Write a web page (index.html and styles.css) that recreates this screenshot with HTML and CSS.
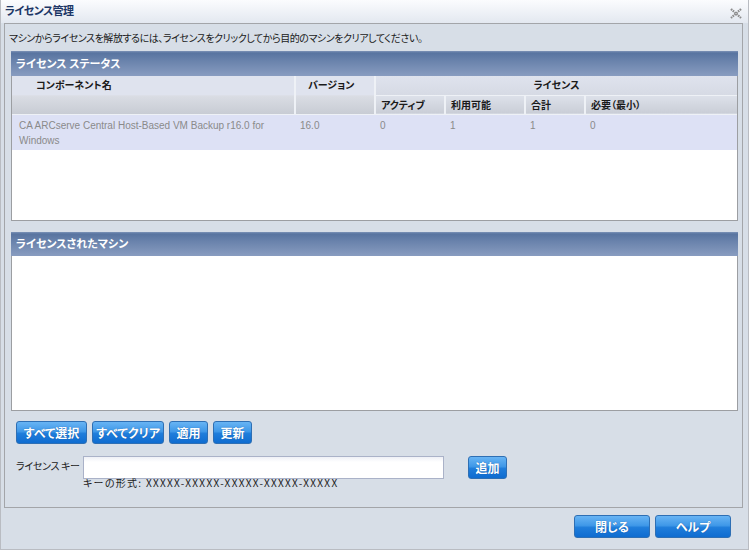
FILE: index.html
```html
<!DOCTYPE html>
<html lang="ja">
<head>
    <meta charset="UTF-8">
    <title>ライセンス管理</title>
    <link rel="stylesheet" href="styles.css">
</head>
<body>
    <div class="window">
        <div class="title-bar">
            <span class="title">ライセンス管理</span>
            <svg class="close-icon" width="12" height="11" viewBox="0 0 12 11">
                <path d="M1 1 L11 10 M11 1 L1 10" stroke="#8c8c8c" stroke-width="2.2" stroke-dasharray="1.6 0.8" fill="none"/>
            </svg>
        </div>

        <div class="frame">
            <p class="hint">マシンからライセンスを解放するには、ライセンスをクリックしてから目的のマシンをクリアしてください。</p>

            <section class="panel status-panel">
                <div class="panel-header">ライセンス ステータス</div>
                <table class="license-table">
                    <colgroup>
                        <col class="col-name">
                        <col class="col-version">
                        <col class="col-active">
                        <col class="col-available">
                        <col class="col-total">
                        <col>
                    </colgroup>
                    <thead>
                        <tr>
                            <th rowspan="2" class="span-head name-head">コンポーネント名</th>
                            <th rowspan="2" class="span-head">バージョン</th>
                            <th colspan="4" class="group-head">ライセンス</th>
                        </tr>
                        <tr class="sub-row">
                            <th>アクティブ</th>
                            <th>利用可能</th>
                            <th>合計</th>
                            <th>必要（最小）</th>
                        </tr>
                    </thead>
                    <tbody>
                        <tr class="data-row">
                            <td class="name-cell">CA ARCserve Central Host-Based VM Backup r16.0 for Windows</td>
                            <td>16.0</td>
                            <td>0</td>
                            <td>1</td>
                            <td>1</td>
                            <td>0</td>
                        </tr>
                    </tbody>
                </table>
            </section>

            <section class="panel machine-panel">
                <div class="panel-header">ライセンスされたマシン</div>
            </section>

            <div class="action-row">
                <button class="blue-btn w-wide">すべて選択</button>
                <button class="blue-btn w-wide2">すべてクリア</button>
                <button class="blue-btn w-small">適用</button>
                <button class="blue-btn w-small">更新</button>
            </div>

            <div class="key-row">
                <label class="key-label">ライセンス キー</label>
                <div class="key-field">
                    <input type="text" class="key-input">
                    <div class="key-format">キーの形式: XXXXX-XXXXX-XXXXX-XXXXX-XXXXX</div>
                </div>
                <button class="blue-btn w-small add-btn">追加</button>
            </div>
        </div>

        <div class="footer">
            <button class="blue-btn w-footer">閉じる</button>
            <button class="blue-btn w-footer">ヘルプ</button>
        </div>
    </div>
</body>
</html>
```

FILE: styles.css
```css
:root {
    --bg-color: #d7dee7;
    --frame-border: #a3a5a9;
    --panel-border: #9c9ea2;
    --head-text: #1d3766;
    --text-color: #1a1a1a;
    --muted-text: #8a8a8a;
}

* {
    margin: 0;
    padding: 0;
    box-sizing: border-box;
}

body {
    font-family: "Noto Sans CJK JP", "Liberation Sans", sans-serif;
    font-size: 10px;
    letter-spacing: -0.3px;
    font-feature-settings: "palt" 1;
    color: var(--text-color);
    background: #ffffff;
}

.window {
    width: 749px;
    height: 550px;
    background: var(--bg-color);
    border: 1px solid #b9bcc2;
    border-top: none;
    display: flex;
    flex-direction: column;
}

/* タイトルバー */
.title-bar {
    height: 23px;
    background: linear-gradient(to bottom, #fbfcfe, #e3e8f0);
    display: flex;
    align-items: center;
    justify-content: space-between;
    padding: 0 6px 0 4px;
}

.title {
    font-size: 11px;
    letter-spacing: -0.6px;
    font-weight: bold;
    color: var(--head-text);
    line-height: 14px;
    margin-top: -4px;
}

.close-icon {
    margin-top: 4px;
}

.frame {
    height: 485px;
    margin-left: 3px;
    width: 739px;
    border: 1px solid var(--frame-border);
    padding: 0 4px 0 6px;
    display: flex;
    flex-direction: column;
}

.hint {
    height: 27px;
    padding-top: 7px;
    line-height: 14px;
    margin-left: -2px;
    letter-spacing: -0.45px;
}

.panel {
    background: #ffffff;
    border: 1px solid var(--panel-border);
    border-top: none;
}

.status-panel {
    height: 170px;
}

.machine-panel {
    height: 179px;
    margin-top: 11px;
}

.panel-header {
    height: 25px;
    background: linear-gradient(to bottom, #7d93b7 0, #5874a0 2px, #6a83ac 40%, #889cc0 100%);
    color: #ffffff;
    font-weight: bold;
    font-size: 11px;
    letter-spacing: 0;
    line-height: 24px;
    padding-left: 5px;
    margin: 0 -1px;
}

.machine-panel .panel-header {
    height: 24px;
    line-height: 23px;
}

/* ライセンス テーブル */
.license-table {
    width: 100%;
    border-collapse: collapse;
    table-layout: fixed;
}

.col-name { width: 283px; }
.col-version { width: 80px; }
.col-active { width: 70px; }
.col-available { width: 80px; }
.col-total { width: 60px; }

.license-table th {
    font-weight: bold;
    text-align: left;
    height: 19px;
    padding: 0 5px;
    letter-spacing: 0;
    border-left: 2px solid #eef1f6;
    border-bottom: 1px solid #eef1f6;
    background: linear-gradient(to bottom, #dde1ea, #c9cdd6);
    line-height: 18px;
}

.license-table th.span-head {
    vertical-align: top;
    background: linear-gradient(to bottom, #dfe3ee 0, #dfe3ee 50%, #dadde4 52%, #c8ccd4 100%);
    padding-left: 12px;
}

.license-table th.name-head {
    border-left: none;
    padding-left: 24px;
}

.license-table th.group-head {
    text-align: center;
    background: linear-gradient(to bottom, #dfe3ee, #d6dae4);
}

.data-row td {
    background: #dde1f5;
    height: 36px;
    vertical-align: top;
    padding: 3px 5px 0 5px;
    font-family: "Liberation Sans", sans-serif;
    font-size: 10px;
    letter-spacing: 0;
    line-height: 15px;
    color: var(--muted-text);
}

.data-row td.name-cell {
    padding-left: 7px;
    padding-right: 14px;
}

/* ボタン */
.blue-btn {
    height: 23px;
    padding: 0;
    white-space: nowrap;
    border: 1px solid #2e6fb4;
    border-radius: 3px;
    background: linear-gradient(to bottom, #68b4f4 0, #3f98e8 45%, #1f7ddb 55%, #0f6cd0 100%);
    color: #ffffff;
    font-family: "Noto Sans CJK JP", sans-serif;
    font-feature-settings: "palt" 1;
    font-weight: bold;
    font-size: 12px;
    line-height: 20px;
    cursor: pointer;
    text-shadow: 0 0 1px rgba(0, 40, 100, 0.5);
}

.w-wide { width: 71px; }
.w-wide2 { width: 72px; }
.w-small { width: 39px; }
.w-footer { width: 76px; }

.action-row {
    display: flex;
    gap: 5px;
    margin-top: 10px;
    padding-left: 5px;
}

.key-row {
    display: flex;
    align-items: flex-start;
    margin-top: 12px;
    padding-left: 5px;
}

.key-label {
    width: 67px;
    white-space: nowrap;
    line-height: 19px;
}

.key-input {
    width: 361px;
    height: 23px;
    border: 1px solid #aab2c8;
    background: linear-gradient(to bottom, #eef0f6 0, #ffffff 5px);
    outline: none;
}

.key-format {
    line-height: 10px;
    margin-top: -1px;
    font-size: 10px;
    letter-spacing: 1.3px;
}

.add-btn {
    margin-left: 24px;
}

.footer {
    display: flex;
    justify-content: flex-end;
    gap: 5px;
    padding: 7px 17px 0 0;
}
```
